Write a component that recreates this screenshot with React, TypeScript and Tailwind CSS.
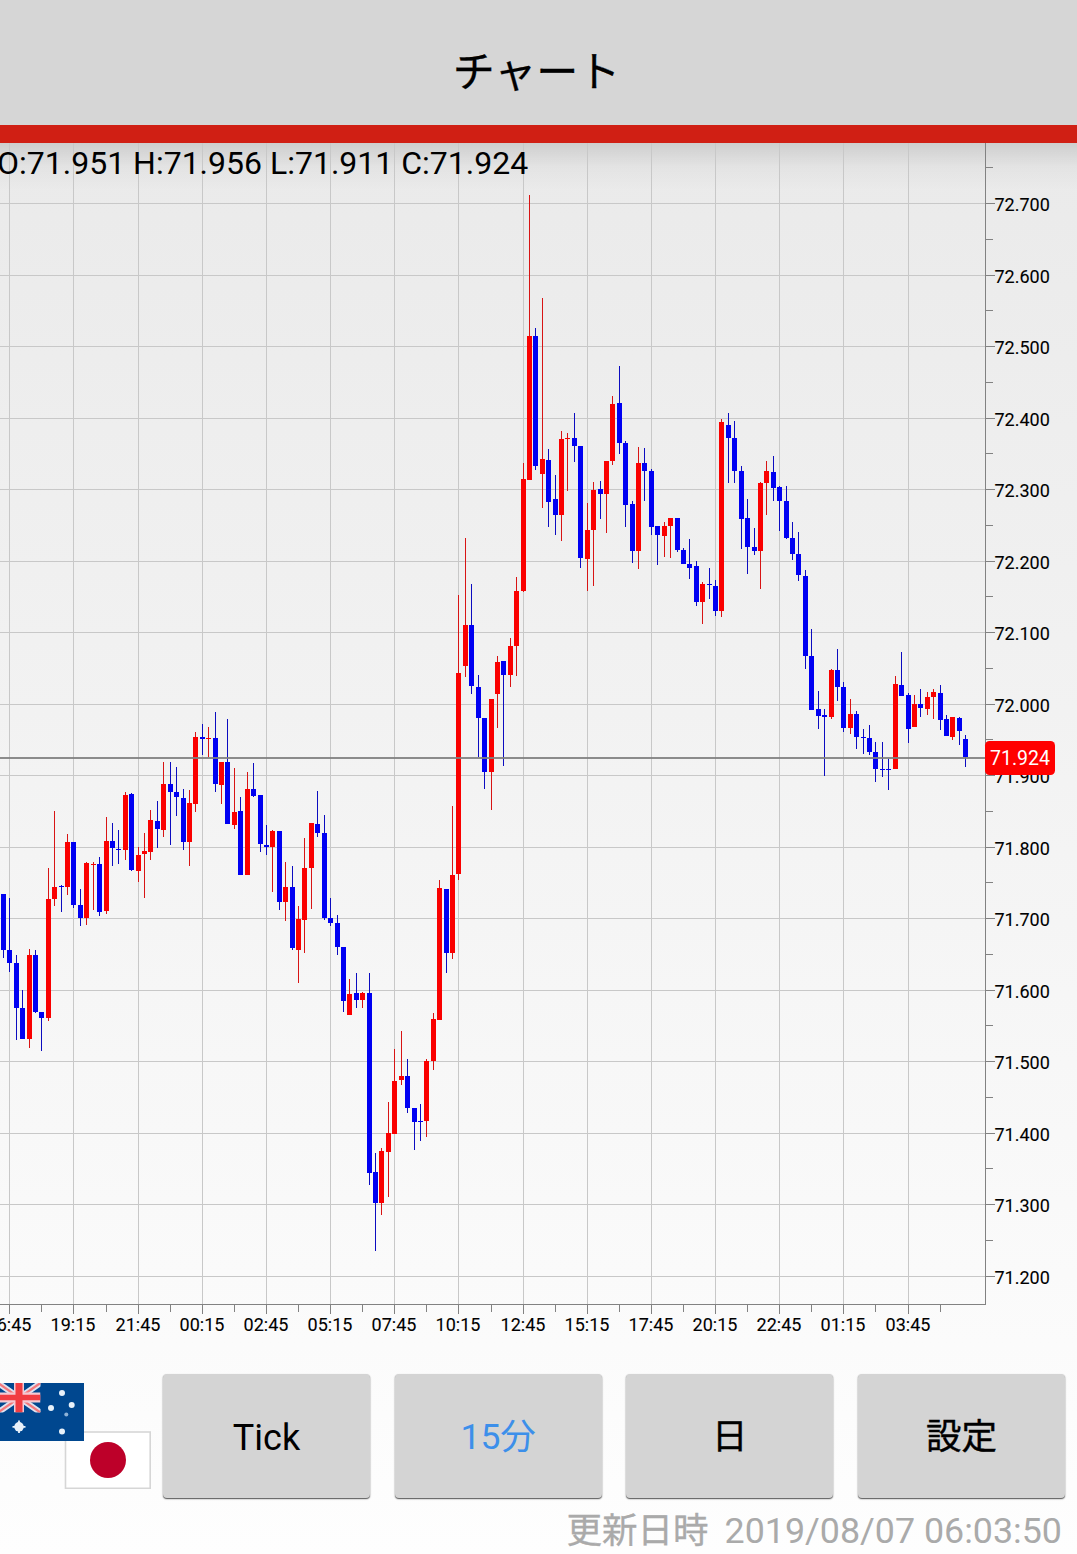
type Candle = [x: number, side: "u" | "d", high: number, top: number, bottom: number, low: number];

// u = close above open (red), d = close below open (blue)
const candles: Candle[] = [
  [3, "d", 894, 894, 950, 958], [9, "d", 898, 950, 963, 972], [16, "d", 955, 963, 1008, 1040], [22, "d", 990, 1008, 1039, 1039],
  [29, "u", 949, 955, 1039, 1048], [35, "d", 950, 955, 1012, 1013], [41, "d", 1012, 1012, 1018, 1051], [48, "u", 868, 899, 1018, 1021],
  [54, "u", 811, 887, 899, 906], [61, "d", 885, 886, 887, 912], [67, "u", 834, 842, 887, 895], [73, "d", 842, 842, 905, 908],
  [80, "d", 889, 905, 918, 926], [86, "u", 862, 863, 918, 925], [93, "u", 862, 864, 865, 910], [99, "d", 857, 864, 912, 916],
  [106, "u", 817, 841, 911, 914], [112, "d", 823, 841, 848, 866], [118, "d", 830, 849, 850, 864], [125, "u", 792, 795, 850, 860],
  [131, "d", 793, 794, 870, 871], [138, "u", 847, 855, 871, 882], [144, "u", 833, 851, 854, 898], [150, "u", 810, 820, 852, 860],
  [157, "d", 801, 821, 829, 848], [163, "u", 762, 784, 830, 837], [170, "d", 762, 784, 792, 845], [176, "d", 767, 792, 797, 816],
  [183, "d", 789, 798, 842, 850], [189, "u", 790, 803, 842, 866], [195, "u", 732, 737, 804, 812], [202, "d", 724, 737, 739, 755],
  [208, "u", 727, 738, 739, 757], [215, "d", 712, 738, 784, 792], [221, "u", 762, 762, 785, 804], [227, "d", 719, 762, 824, 824],
  [234, "u", 768, 812, 825, 829], [240, "d", 797, 811, 875, 875], [247, "u", 772, 789, 875, 875], [253, "d", 763, 789, 796, 797],
  [260, "d", 795, 795, 844, 852], [266, "d", 825, 845, 847, 855], [272, "u", 830, 831, 847, 892], [279, "d", 831, 831, 902, 910],
  [285, "u", 862, 887, 902, 921], [292, "d", 866, 887, 948, 950], [298, "u", 906, 919, 950, 983], [304, "u", 838, 868, 920, 953],
  [311, "u", 823, 823, 868, 909], [317, "d", 791, 824, 833, 837], [324, "d", 815, 833, 918, 920], [330, "d", 898, 918, 923, 926],
  [337, "d", 915, 923, 947, 955], [343, "d", 947, 947, 1001, 1012], [349, "u", 979, 994, 1015, 1015], [356, "d", 973, 993, 1000, 1008],
  [362, "u", 992, 993, 1000, 1008], [369, "d", 973, 993, 1173, 1185], [375, "d", 1153, 1172, 1203, 1251], [381, "u", 1148, 1151, 1203, 1215],
  [388, "u", 1102, 1133, 1152, 1197], [394, "u", 1049, 1081, 1134, 1134], [401, "u", 1031, 1076, 1080, 1085], [407, "d", 1059, 1076, 1108, 1113],
  [414, "d", 1108, 1108, 1122, 1150], [420, "d", 1104, 1121, 1122, 1141], [426, "u", 1059, 1061, 1121, 1137], [433, "u", 1013, 1019, 1061, 1070],
  [439, "u", 880, 888, 1020, 1020], [446, "d", 889, 889, 953, 973], [452, "u", 806, 875, 953, 959], [458, "u", 595, 673, 874, 880],
  [465, "u", 538, 625, 666, 677], [471, "d", 584, 625, 686, 694], [478, "d", 675, 687, 718, 757], [484, "d", 718, 718, 772, 789],
  [491, "u", 699, 699, 772, 810], [497, "u", 656, 662, 694, 728], [503, "d", 661, 661, 675, 766], [510, "u", 638, 646, 675, 687],
  [516, "u", 577, 591, 646, 676], [523, "u", 463, 479, 591, 592], [529, "u", 195, 336, 480, 480], [535, "d", 328, 336, 466, 470],
  [542, "u", 298, 459, 474, 508], [548, "d", 449, 460, 502, 527], [555, "d", 475, 499, 515, 535], [561, "u", 431, 439, 515, 541],
  [567, "u", 433, 438, 439, 491], [574, "d", 413, 438, 446, 462], [580, "d", 446, 446, 558, 568], [587, "u", 503, 530, 559, 591],
  [593, "u", 482, 490, 530, 586], [600, "d", 481, 489, 494, 519], [606, "u", 461, 461, 494, 533], [612, "u", 396, 404, 461, 465],
  [619, "d", 366, 403, 443, 454], [625, "d", 441, 443, 505, 527], [632, "d", 501, 504, 551, 563], [638, "u", 447, 463, 551, 569],
  [644, "d", 448, 463, 471, 501], [651, "d", 469, 471, 527, 535], [657, "d", 526, 526, 535, 565], [664, "u", 522, 526, 536, 557],
  [670, "u", 518, 518, 526, 558], [677, "d", 518, 518, 550, 552], [683, "d", 548, 550, 564, 564], [689, "d", 539, 564, 568, 579],
  [696, "d", 561, 566, 602, 606], [702, "u", 582, 584, 602, 624], [709, "d", 568, 584, 585, 599], [715, "d", 580, 586, 611, 616],
  [721, "u", 419, 422, 611, 617], [728, "d", 413, 425, 438, 483], [734, "d", 421, 438, 471, 483], [741, "d", 466, 471, 519, 549],
  [747, "d", 499, 518, 547, 574], [754, "d", 528, 547, 551, 555], [760, "u", 482, 483, 551, 589], [766, "u", 461, 471, 483, 515],
  [773, "d", 456, 472, 488, 501], [779, "d", 486, 487, 501, 531], [786, "d", 486, 501, 538, 539], [792, "d", 522, 538, 554, 560],
  [798, "d", 532, 554, 575, 581], [805, "d", 570, 576, 656, 669], [811, "d", 629, 656, 710, 710], [818, "d", 691, 709, 716, 729],
  [824, "d", 709, 715, 717, 776], [831, "u", 669, 670, 717, 719], [837, "d", 649, 670, 687, 701], [843, "d", 682, 687, 728, 732],
  [850, "u", 699, 714, 728, 734], [856, "d", 711, 714, 737, 749], [863, "d", 729, 737, 738, 754], [869, "d", 725, 738, 752, 755],
  [875, "d", 742, 752, 769, 782], [882, "d", 742, 769, 770, 777], [888, "d", 759, 769, 770, 790], [895, "u", 676, 684, 769, 769],
  [901, "d", 652, 685, 696, 696], [908, "d", 693, 695, 729, 743], [914, "u", 695, 704, 727, 727], [920, "d", 689, 704, 708, 717],
  [927, "u", 692, 697, 709, 715], [933, "u", 689, 692, 697, 719], [940, "d", 685, 693, 720, 730], [946, "d", 715, 719, 736, 736],
  [952, "u", 717, 717, 737, 740], [959, "d", 717, 718, 731, 745], [965, "d", 735, 739, 757, 767],
];

const times = [
  { x: 9, minor: 41, label: "16:45" },
  { x: 73, minor: 106, label: "19:15" },
  { x: 138, minor: 170, label: "21:45" },
  { x: 202, minor: 234, label: "00:15" },
  { x: 266, minor: 298, label: "02:45" },
  { x: 330, minor: 362, label: "05:15" },
  { x: 394, minor: 426, label: "07:45" },
  { x: 458, minor: 491, label: "10:15" },
  { x: 523, minor: 555, label: "12:45" },
  { x: 587, minor: 619, label: "15:15" },
  { x: 651, minor: 683, label: "17:45" },
  { x: 715, minor: 747, label: "20:15" },
  { x: 779, minor: 811, label: "22:45" },
  { x: 843, minor: 875, label: "01:15" },
  { x: 908, minor: 940, label: "03:45" },
];

const prices = Array.from({ length: 16 }, (_, i) => ({
  y: Math.floor(203.5 + i * 71.5),
  label: (72.7 - i * 0.1).toFixed(3),
}));

const minorPrices = Array.from({ length: 16 }, (_, i) => Math.floor(167.75 + i * 71.5));

const AXIS_X = 985;
const AXIS_Y = 1304;

function Chart() {
  return (
    <svg viewBox="0 143 1077 1202" className="block h-[1202px] w-full font-[Roboto,sans-serif]">
      <g shapeRendering="crispEdges">
        <g fill="#c8c8c8">
          {times.map((t) => (
            <rect key={t.x} x={t.x} y={143} width={1} height={AXIS_Y - 143} />
          ))}
          {prices.map((p) => (
            <rect key={p.y} x={0} y={p.y} width={AXIS_X} height={1} />
          ))}
        </g>

        {candles.map(([x, side, high, top, bottom, low]) => (
          <g key={x}>
            <rect x={x} y={high} width={1} height={low - high} fill={side === "u" ? "#d81414" : "#0c0cc0"} />
            <rect x={x - 2} y={top} width={5} height={bottom - top} fill={side === "u" ? "#fa0000" : "#0000f2"} />
          </g>
        ))}

        <g fill="#828282">
          <rect x={AXIS_X} y={143} width={1} height={AXIS_Y - 142} />
          <rect x={0} y={AXIS_Y} width={AXIS_X} height={1} />
          {prices.map((p) => (
            <rect key={p.y} x={AXIS_X} y={p.y} width={10} height={1} />
          ))}
          {minorPrices.map((y) => (
            <rect key={y} x={AXIS_X} y={y} width={8} height={1} />
          ))}
          {times.map((t) => (
            <rect key={t.x} x={t.x} y={AXIS_Y} width={1} height={10} />
          ))}
          {times.map((t) => (
            <rect key={t.minor} x={t.minor} y={AXIS_Y} width={1} height={8} />
          ))}
        </g>

        <rect x={0} y={757} width={AXIS_X} height={2} fill="#808080" fillOpacity={0.9} />
      </g>

      <g fontSize={18} fill="#000" stroke="#000" strokeWidth={0.1}>
        {prices.map((p) => (
          <text key={p.y} x={994.5} y={p.y + 8}>
            {p.label}
          </text>
        ))}
        {times.map((t) => (
          <text key={t.x} x={t.x} y={1331} textAnchor="middle">
            {t.label}
          </text>
        ))}
      </g>

      <rect x={985} y={741} width={70} height={34} rx={4.5} fill="#ff0000" />
      <text x={1020} y={765} fontSize={19.5} fill="#fff" textAnchor="middle">
        71.924
      </text>

      <text x={-3} y={173.5} fontSize={32} fill="#000">
        O:71.951 H:71.956 L:71.911 C:71.924
      </text>
    </svg>
  );
}

function Flags() {
  return (
    <svg viewBox="0 0 151 106" className="h-[106px] w-[151px] shrink-0">
      <rect x={65.5} y={49} width={84.7} height={56.3} fill="#fff" stroke="#d6d6d6" strokeWidth={1.6} />
      <circle cx={108} cy={77} r={18} fill="#bd0029" />

      <rect x={0} y={0} width={84} height={58} fill="#00478f" />
      <svg x={-2} y={0} width={42.5} height={29.5} viewBox="0 0 42.5 29.5">
        <path d="M0 0L42.5 29.5M42.5 0L0 29.5" stroke="#dfe2f0" strokeWidth={6} />
        <path d="M0 0L42.5 29.5M42.5 0L0 29.5" stroke="#f4787c" strokeWidth={2.4} />
        <path d="M21 0V29.5M0 14.5H42.5" stroke="#f5c9d2" strokeWidth={10} />
        <path d="M21 0V29.5" stroke="#f13c42" strokeWidth={7} />
        <path d="M0 14.5H42.5" stroke="#f13c42" strokeWidth={5.5} />
      </svg>
      <g fill="#e8f1fa">
        <circle cx={62} cy={10} r={3} />
        <circle cx={51} cy={25} r={3} />
        <circle cx={71.7} cy={22} r={3} />
        <circle cx={66.3} cy={31.5} r={2} fill="#8fb3d6" />
        <circle cx={62} cy={48.5} r={3} />
        <circle cx={19} cy={43.8} r={4.8} />
        <path d="M19 37.500V50M12.500 43.800H25.500" stroke="#e8f1fa" strokeWidth={1.8} />
      </g>
    </svg>
  );
}

const buttons = [
  { label: "Tick", style: "text-[36px] text-black" },
  { label: "15分", style: "text-[35.5px] text-[#3c8fea]" },
  { label: "日", style: "text-[35.5px] text-black [-webkit-text-stroke:0.4px_black]" },
  { label: "設定", style: "text-[35.5px] text-black [-webkit-text-stroke:0.4px_black]" },
];

export default function App() {
  return (
    <div className="flex h-[1554px] w-full flex-col overflow-hidden bg-linear-to-b from-[#e8e8e8] to-[#fefefe] font-[Roboto,'Noto_Sans_CJK_JP',sans-serif] text-black">
      <header className="flex h-[143px] shrink-0 items-center justify-center border-b-[18px] border-[#d01f14] bg-[#d6d6d6] pt-[20px] pr-[4px]">
        <h1 className="text-[42px] leading-none [-webkit-text-stroke:0.3px_black]">チャート</h1>
      </header>

      <main className="h-[1202px] shrink-0 bg-linear-to-b from-black/12 via-black/3 via-[24px] to-transparent to-[48px]">
        <Chart />
      </main>

      <div className="mt-[29px] flex shrink-0 justify-between pr-3">
        <div className="pt-[9px]">
          <Flags />
        </div>
        <div className="flex w-[902px] justify-between">
          {buttons.map((b) => (
            <button
              key={b.label}
              className={`h-[124px] w-[207px] rounded-[4px] bg-[#d4d4d4] pt-1 shadow-[0_1px_1px_rgba(0,0,0,0.5),0_1px_2px_rgba(0,0,0,0.3)] ${b.style}`}
            >
              {b.label}
            </button>
          ))}
        </div>
      </div>

      <p className="mt-[13px] flex justify-end gap-4 pr-[15px] text-[35.8px] leading-[40px] text-[#aaaaaa]">
        <span className="text-[35.5px] [-webkit-text-stroke:0.3px_#aaaaaa]">更新日時</span>
        <span>2019/08/07 06:03:50</span>
      </p>
    </div>
  );
}
